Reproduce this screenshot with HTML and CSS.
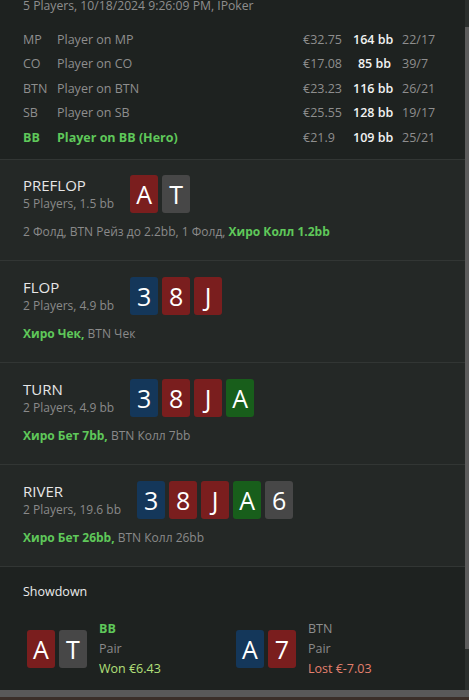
FILE: index.html
```html
<!DOCTYPE html>
<html>
<head>
<meta charset="utf-8">
<link rel="stylesheet" href="styles.css">
</head>
<body>
<div class="frame">
  <div class="viewport">
    <main class="content">
      <section class="header">
        <div class="meta">5 Players, 10/18/2024 9:26:09 PM, IPoker</div>
        <div class="players">
          <div class="prow"><span class="pos">MP</span><span class="pname">Player on MP</span><span class="money">€32.75</span><span class="stack">164 bb</span><span class="ratio">22/17</span></div>
          <div class="prow"><span class="pos">CO</span><span class="pname">Player on CO</span><span class="money">€17.08</span><span class="stack">85 bb</span><span class="ratio">39/7</span></div>
          <div class="prow"><span class="pos">BTN</span><span class="pname">Player on BTN</span><span class="money">€23.23</span><span class="stack">116 bb</span><span class="ratio">26/21</span></div>
          <div class="prow"><span class="pos">SB</span><span class="pname">Player on SB</span><span class="money">€25.55</span><span class="stack">128 bb</span><span class="ratio">19/17</span></div>
          <div class="prow hero"><span class="pos">BB</span><span class="pname">Player on BB (Hero)</span><span class="money">€21.9</span><span class="stack">109 bb</span><span class="ratio">25/21</span></div>
        </div>
      </section>

      <section class="street first">
        <div class="street-head">
          <div class="street-title"><div class="name">PREFLOP</div><div class="sub">5 Players, 1.5 bb</div></div>
          <div class="cards"><span class="card red">A</span><span class="card gray">T</span></div>
        </div>
        <div class="actions">2 Фолд, BTN Рейз до 2.2bb, 1 Фолд, <b class="hero-act">Хиро Колл 1.2bb</b></div>
      </section>

      <section class="street">
        <div class="street-head">
          <div class="street-title"><div class="name">FLOP</div><div class="sub">2 Players, 4.9 bb</div></div>
          <div class="cards"><span class="card blue">3</span><span class="card red">8</span><span class="card red">J</span></div>
        </div>
        <div class="actions"><b class="hero-act">Хиро Чек,</b> BTN Чек</div>
      </section>

      <section class="street">
        <div class="street-head">
          <div class="street-title"><div class="name">TURN</div><div class="sub">2 Players, 4.9 bb</div></div>
          <div class="cards"><span class="card blue">3</span><span class="card red">8</span><span class="card red">J</span><span class="card green">A</span></div>
        </div>
        <div class="actions"><b class="hero-act">Хиро Бет 7bb,</b> BTN Колл 7bb</div>
      </section>

      <section class="street">
        <div class="street-head">
          <div class="street-title"><div class="name">RIVER</div><div class="sub">2 Players, 19.6 bb</div></div>
          <div class="cards"><span class="card blue">3</span><span class="card red">8</span><span class="card red">J</span><span class="card green">A</span><span class="card gray">6</span></div>
        </div>
        <div class="actions"><b class="hero-act">Хиро Бет 26bb,</b> BTN Колл 26bb</div>
      </section>

      <section class="showdown">
        <div class="sd-title">Showdown</div>
        <div class="sd-grid">
          <div class="sd-player">
            <div class="cards"><span class="card red">A</span><span class="card gray">T</span></div>
            <div class="sd-info"><div class="sd-pos win-pos">BB</div><div class="sd-hand">Pair</div><div class="won">Won €6.43</div></div>
          </div>
          <div class="sd-player">
            <div class="cards"><span class="card blue">A</span><span class="card red">7</span></div>
            <div class="sd-info"><div class="sd-pos">BTN</div><div class="sd-hand">Pair</div><div class="lost">Lost €-7.03</div></div>
          </div>
        </div>
      </section>
    </main>
    <div class="scrollbar"><div class="thumb"></div></div>
  </div>
  <div class="bottom-bar"></div>
</div>
</body>
</html>
```

FILE: styles.css
```css
* { box-sizing: border-box; }
html, body { margin: 0; padding: 0; background: #1e2220; }
body {
  font-family: "Open Sans", "Noto Sans", sans-serif;
  font-size: 12.2px;
  color: #8e8e8e;
  width: 469px;
  height: 700px;
  overflow: hidden;
}
.frame { display: flex; flex-direction: column; height: 700px; }
.viewport { display: flex; height: 690px; overflow: hidden; }
.content { width: 465px; display: flex; flex-direction: column; }
.scrollbar { width: 4px; background: #2b2f2d; display: flex; flex-direction: column; }
.thumb { margin-top: 27px; height: 622px; background: #5c5c5c; }
.bottom-bar { height: 10px; background: #595959; border-bottom: 3px solid #3b2f29; }

.header { background: #1e2220; padding: 0 0 0 23px; height: 160px; border-bottom: 1px solid #323634; }
.meta { margin-top: -3px; line-height: 18px; color: #8e8e8e; }
.players { margin-top: 12px; display: flex; flex-direction: column; }
.prow { display: grid; grid-template-columns: 34px 246px 50px 38px 1fr; height: 24.5px; align-items: center; font-size: 12.5px; }
.prow .stack { color: #f2f2f2; font-weight: 600; text-align: right; white-space: nowrap; }
.prow .ratio { padding-left: 11px; }
.prow.hero .pos, .prow.hero .pname { color: #5fc85a; font-weight: 700; }

.street { background: #242826; padding: 16px 23px 19px; border-bottom: 1px solid #323634; }
.street.first { padding-top: 15px; padding-bottom: 19px; }
.street-head { display: flex; align-items: center; gap: 16px; }
.street-title .name { font-size: 15px; line-height: 20px; color: #e6e6e6; }
.street-title .sub { font-size: 12px; line-height: 18px; color: #8a8a8a; }
.cards { display: flex; gap: 4px; }
.card {
  width: 28px; height: 38px; border-radius: 3px;
  display: flex; align-items: center; justify-content: center;
  color: #ffffff; font-size: 25px; line-height: 1;
}
.card.red { background: #7a1e1e; }
.card.gray { background: #474747; }
.card.blue { background: #14375a; }
.card.green { background: #185e1b; }
.actions { margin-top: 10px; font-size: 12px; line-height: 18px; color: #8a8a8a; }
.hero-act { color: #5fc85a; font-weight: 700; }

.showdown { background: #1e2220; padding: 16px 23px 0; flex: 1; }
.sd-title { color: #ececec; line-height: 18px; font-size: 12.5px; }
.sd-grid { margin-top: 18px; display: grid; grid-template-columns: 209px 1fr; padding-left: 4px; }
.sd-player { display: flex; align-items: center; gap: 12px; }
.sd-info { line-height: 20px; font-size: 12.5px; }
.sd-pos.win-pos { color: #5fc85a; font-weight: 700; }
.sd-hand { color: #8a8a8a; }
.won { color: #b3e07a; }
.lost { color: #e4806e; }
```
